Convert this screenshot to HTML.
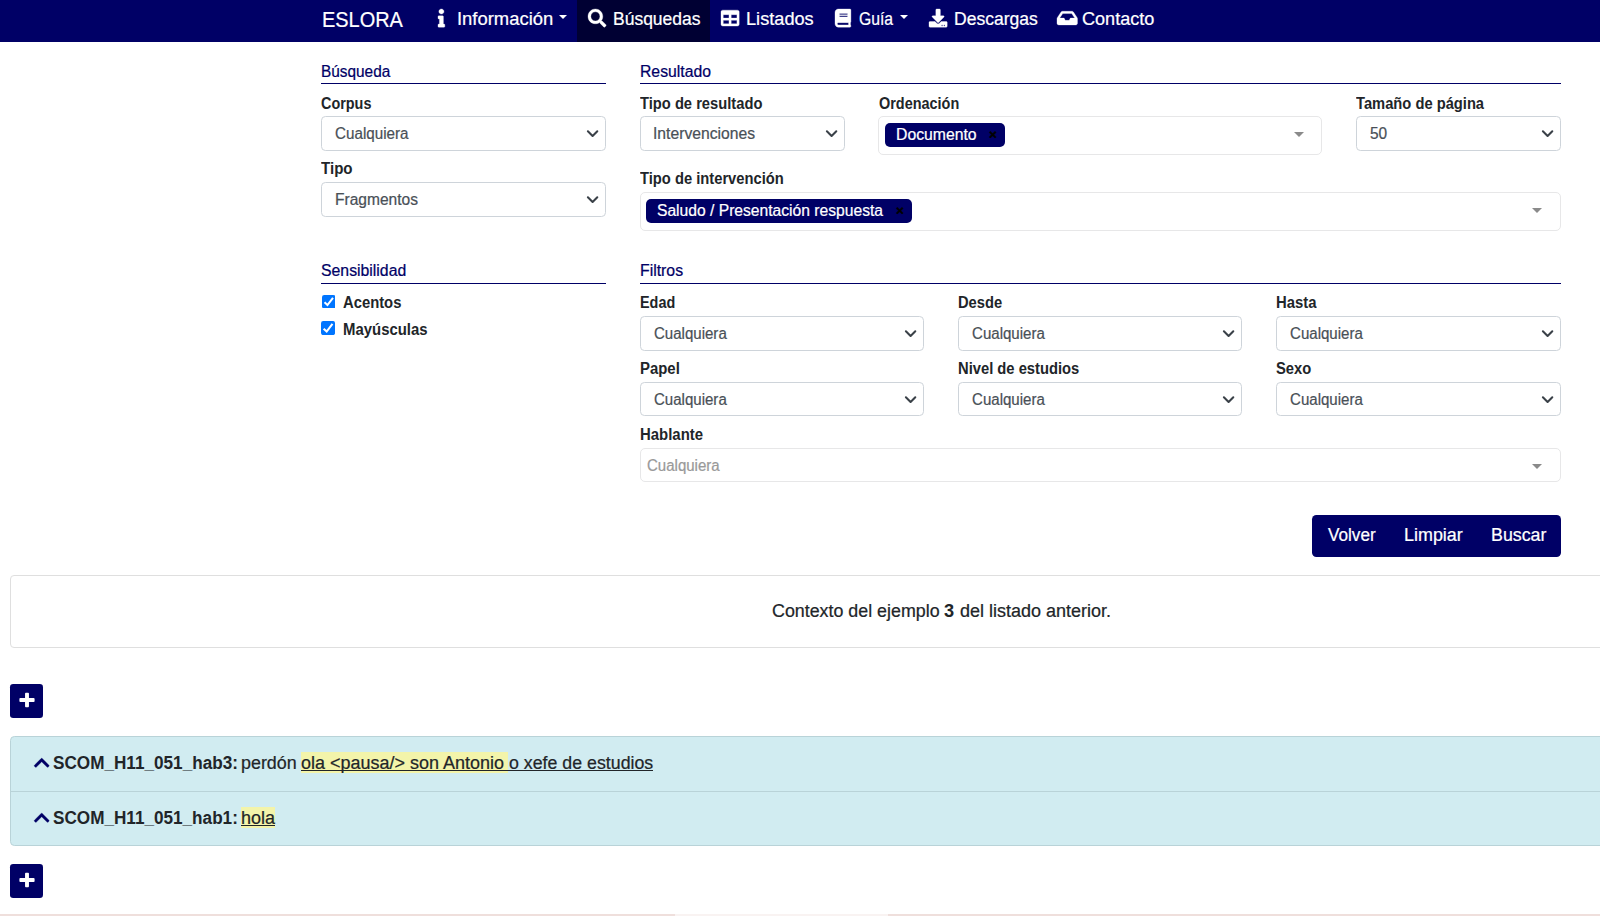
<!DOCTYPE html>
<html lang="es"><head><meta charset="utf-8"><title>ESLORA</title>
<style>
html,body{margin:0;padding:0;background:#fff}
html{overflow:hidden}
body{width:1600px;height:916px;overflow:hidden;font-family:"Liberation Sans", sans-serif}
nav,main,form,section,footer{display:block;margin:0;padding:0}
#page{position:relative;width:1600px;height:916px;overflow:hidden;background:#fff}
.b{position:absolute;display:block}
.t{position:absolute;display:block;white-space:pre;line-height:1;transform-origin:0 0;font-family:"Liberation Sans", sans-serif}
</style></head>
<body>
<div id="page">
<nav>
<div class="b" style="left:0px;top:0px;width:1882px;height:42px;background:#000066"></div>
<div class="b" style="left:577px;top:0px;width:133px;height:42px;background:#000033"></div>
<svg class="b" style="left:438.09px;top:9.10px" width="6.82" height="18.20" viewBox="0 0 192 512" overflow="visible"><path fill="#fff" stroke="#fff" stroke-width="9" d="M20 424.229h20V279.771H20c-11.046 0-20-8.954-20-20V212c0-11.046 8.954-20 20-20h112c11.046 0 20 8.954 20 20v212.229h20c11.046 0 20 8.954 20 20V492c0 11.046-8.954 20-20 20H20c-11.046 0-20-8.954-20-20v-47.771c0-11.046 8.954-20 20-20zM96 0C56.235 0 24 32.235 24 72s32.235 72 72 72 72-32.235 72-72S135.765 0 96 0z"/></svg>
<svg class="b" style="left:587.65px;top:9.10px" width="18.20" height="18.20" viewBox="0 0 512 512" overflow="visible"><path fill="#fff" stroke="#fff" stroke-width="9" d="M505 442.7L405.3 343c-4.5-4.5-10.6-7-17-7H372c27.600-35.300 44-79.700 44-128C416 93.100 322.900 0 208 0S0 93.100 0 208s93.100 208 208 208c48.300 0 92.700-16.400 128-44v16.300c0 6.400 2.500 12.500 7 17l99.700 99.700c9.400 9.400 24.600 9.400 33.900 0l28.300-28.300c9.400-9.400 9.400-24.600.1-34zM208 336c-70.700 0-128-57.200-128-128 0-70.700 57.200-128 128-128 70.700 0 128 57.200 128 128 0 70.700-57.200 128-128 128z"/></svg>
<svg class="b" style="left:720.90px;top:9.10px" width="18.20" height="18.20" viewBox="0 0 512 512" overflow="visible"><path fill="#fff" stroke="#fff" stroke-width="9" d="M464 32H48C21.490 32 0 53.490 0 80v352c0 26.510 21.490 48 48 48h416c26.510 0 48-21.490 48-48V80c0-26.510-21.490-48-48-48zM224 416H64v-96h160v96zm0-160H64v-96h160v96zm224 160H288v-96h160v96zm0-160H288v-96h160v96z"/></svg>
<svg class="b" style="left:834.74px;top:9.10px" width="15.92" height="18.20" viewBox="0 0 448 512" overflow="visible"><path fill="#fff" stroke="#fff" stroke-width="9" d="M448 360V24c0-13.300-10.700-24-24-24H96C43 0 0 43 0 96v320c0 53 43 96 96 96h328c13.300 0 24-10.700 24-24v-16c0-7.500-3.500-14.300-8.900-18.700-4.200-15.400-4.200-59.300 0-74.700 5.400-4.300 8.900-11.100 8.900-18.600zM128 134c0-3.300 2.700-6 6-6h212c3.300 0 6 2.700 6 6v20c0 3.300-2.700 6-6 6H134c-3.300 0-6-2.700-6-6v-20zm0 64c0-3.300 2.700-6 6-6h212c3.300 0 6 2.700 6 6v20c0 3.300-2.700 6-6 6H134c-3.300 0-6-2.700-6-6v-20zm253.400 250H96c-17.700 0-32-14.300-32-32 0-17.600 14.400-32 32-32h285.400c-1.900 17.100-1.900 46.900 0 64z"/></svg>
<svg class="b" style="left:929.05px;top:9.10px" width="18.20" height="18.20" viewBox="0 0 512 512" overflow="visible"><path fill="#fff" stroke="#fff" stroke-width="9" d="M216 0h80c13.300 0 24 10.700 24 24v168h87.700c17.800 0 26.700 21.500 14.100 34.100L269.700 378.300c-7.500 7.500-19.800 7.500-27.300 0L90.100 226.100c-12.600-12.600-3.700-34.100 14.100-34.100H192V24c0-13.300 10.700-24 24-24zm296 376v112c0 13.300-10.700 24-24 24H24c-13.300 0-24-10.700-24-24V376c0-13.300 10.700-24 24-24h146.700l49 49c20.100 20.100 52.500 20.100 72.600 0l49-49H488c13.300 0 24 10.700 24 24zm-124 88c0-11-9-20-20-20s-20 9-20 20 9 20 20 20 20-9 20-20zm64 0c0-11-9-20-20-20s-20 9-20 20 9 20 20 20 20-9 20-20z"/></svg>
<svg class="b" style="left:1056.56px;top:9.10px" width="20.47" height="18.20" viewBox="0 0 576 512" overflow="visible"><path fill="#fff" stroke="#fff" stroke-width="9" d="M567.938 243.908L462.250 85.374A48.003 48.003 0 0 0 422.311 64H153.689a48 48 0 0 0-39.938 21.374L8.062 243.908A47.994 47.994 0 0 0 0 270.533V400c0 26.510 21.490 48 48 48h480c26.510 0 48-21.490 48-48V270.533a47.994 47.994 0 0 0-8.062-26.625zM162.252 128h251.497l85.333 128H376l-32 64H232l-32-64H76.918l85.334-128z"/></svg>
<a class="t" id="t1" style="left:321.75px;top:9.00px;font-size:22px;color:#fff;-webkit-text-stroke:0.22px;transform:scaleX(0.9060);">ESLORA</a>
<a class="t" id="t2" style="left:456.87px;top:10.70px;font-size:17.6px;color:#fff;-webkit-text-stroke:0.22px;transform:scaleX(1.0469);">Información</a>
<a class="t" id="t3" style="left:612.88px;top:10.70px;font-size:17.6px;color:#fff;-webkit-text-stroke:0.22px;transform:scaleX(0.9943);">Búsquedas</a>
<a class="t" id="t4" style="left:745.87px;top:10.70px;font-size:17.6px;color:#fff;-webkit-text-stroke:0.22px;transform:scaleX(1.0329);">Listados</a>
<a class="t" id="t5" style="left:858.59px;top:10.70px;font-size:17.6px;color:#fff;-webkit-text-stroke:0.22px;transform:scaleX(0.8948);">Guía</a>
<a class="t" id="t6" style="left:953.51px;top:10.70px;font-size:17.6px;color:#fff;-webkit-text-stroke:0.22px;transform:scaleX(0.9977);">Descargas</a>
<a class="t" id="t7" style="left:1082.19px;top:10.70px;font-size:17.6px;color:#fff;-webkit-text-stroke:0.22px;transform:scaleX(1.0273);">Contacto</a>
<div class="b" style="left:558.5px;top:15.3px;width:0;height:0;border-left:4.7px solid transparent;border-right:4.7px solid transparent;border-top:4.8px solid #fff"></div>
<div class="b" style="left:899.6px;top:15.3px;width:0;height:0;border-left:4.7px solid transparent;border-right:4.7px solid transparent;border-top:4.8px solid #fff"></div>
</nav>
<main>
<form>
<span class="t" id="t8" style="left:320.66px;top:64.20px;font-size:15.6px;color:#000066;-webkit-text-stroke:0.22px;transform:scaleX(0.9856);">Búsqueda</span>
<div class="b" style="left:321px;top:83px;width:285px;height:1px;background:#000066"></div>
<span class="t" id="t9" style="left:639.94px;top:64.20px;font-size:15.6px;color:#000066;-webkit-text-stroke:0.22px;transform:scaleX(1.0097);">Resultado</span>
<div class="b" style="left:640px;top:83px;width:921px;height:1px;background:#000066"></div>
<span class="t" id="t10" style="left:321.27px;top:263.20px;font-size:15.6px;color:#000066;-webkit-text-stroke:0.22px;transform:scaleX(1.0138);">Sensibilidad</span>
<div class="b" style="left:321px;top:283px;width:285px;height:1px;background:#000066"></div>
<span class="t" id="t11" style="left:639.51px;top:263.20px;font-size:15.6px;color:#000066;-webkit-text-stroke:0.22px;transform:scaleX(1.0138);">Filtros</span>
<div class="b" style="left:640px;top:283px;width:921px;height:1px;background:#000066"></div>
<label class="t" id="t12" style="left:321.49px;top:96.20px;font-size:15.6px;color:#212529;font-weight:700;transform:scaleX(0.9237);">Corpus</label>
<label class="t" id="t13" style="left:321.22px;top:161.20px;font-size:15.6px;color:#212529;font-weight:700;transform:scaleX(0.9677);">Tipo</label>
<label class="t" id="t14" style="left:639.75px;top:96.20px;font-size:15.6px;color:#212529;font-weight:700;transform:scaleX(0.9438);">Tipo de resultado</label>
<label class="t" id="t15" style="left:879.49px;top:96.20px;font-size:15.6px;color:#212529;font-weight:700;transform:scaleX(0.9260);">Ordenación</label>
<label class="t" id="t16" style="left:1356.08px;top:96.20px;font-size:15.6px;color:#212529;font-weight:700;transform:scaleX(0.9433);">Tamaño de página</label>
<label class="t" id="t17" style="left:639.75px;top:171.20px;font-size:15.6px;color:#212529;font-weight:700;transform:scaleX(0.9447);">Tipo de intervención</label>
<label class="t" id="t18" style="left:639.98px;top:295.20px;font-size:15.6px;color:#212529;font-weight:700;transform:scaleX(0.9226);">Edad</label>
<label class="t" id="t19" style="left:958.30px;top:295.20px;font-size:15.6px;color:#212529;font-weight:700;transform:scaleX(0.9421);">Desde</label>
<label class="t" id="t20" style="left:1276.22px;top:295.20px;font-size:15.6px;color:#212529;font-weight:700;transform:scaleX(0.9520);">Hasta</label>
<label class="t" id="t21" style="left:640.47px;top:361.20px;font-size:15.6px;color:#212529;font-weight:700;transform:scaleX(0.9561);">Papel</label>
<label class="t" id="t22" style="left:957.86px;top:361.20px;font-size:15.6px;color:#212529;font-weight:700;transform:scaleX(0.9453);">Nivel de estudios</label>
<label class="t" id="t23" style="left:1275.73px;top:361.20px;font-size:15.6px;color:#212529;font-weight:700;transform:scaleX(0.9457);">Sexo</label>
<label class="t" id="t24" style="left:640.24px;top:427.20px;font-size:15.6px;color:#212529;font-weight:700;transform:scaleX(0.9573);">Hablante</label>
<label class="t" id="t25" style="left:343.41px;top:295.20px;font-size:15.6px;color:#212529;font-weight:700;transform:scaleX(0.9492);">Acentos</label>
<label class="t" id="t26" style="left:343.06px;top:322.20px;font-size:15.6px;color:#212529;font-weight:700;transform:scaleX(0.9565);">Mayúsculas</label>
<div class="b" style="left:321px;top:116px;width:285px;height:35px;border:1px solid #ced4da;border-radius:4.4px;background:#fff;box-sizing:border-box"></div>
<span class="t" id="t27" style="left:335.46px;top:126.20px;font-size:15.6px;color:#495057;-webkit-text-stroke:0.22px;transform:scaleX(0.9746);">Cualquiera</span>
<svg class="b" style="left:586.35px;top:126.85px" width="13.2" height="13.2" viewBox="0 0 16 16"><path d="M2.3 5.2l5.7 5.6 5.7-5.6" fill="none" stroke="#3a4148" stroke-width="2.5" stroke-linecap="round" stroke-linejoin="round"/></svg>
<div class="b" style="left:321px;top:182px;width:285px;height:35px;border:1px solid #ced4da;border-radius:4.4px;background:#fff;box-sizing:border-box"></div>
<span class="t" id="t28" style="left:335.49px;top:192.20px;font-size:15.6px;color:#495057;-webkit-text-stroke:0.22px;transform:scaleX(0.9973);">Fragmentos</span>
<svg class="b" style="left:586.35px;top:192.85px" width="13.2" height="13.2" viewBox="0 0 16 16"><path d="M2.3 5.2l5.7 5.6 5.7-5.6" fill="none" stroke="#3a4148" stroke-width="2.5" stroke-linecap="round" stroke-linejoin="round"/></svg>
<div class="b" style="left:640px;top:116px;width:205px;height:35px;border:1px solid #ced4da;border-radius:4.4px;background:#fff;box-sizing:border-box"></div>
<span class="t" id="t29" style="left:653.45px;top:126.20px;font-size:15.6px;color:#495057;-webkit-text-stroke:0.22px;transform:scaleX(1.0059);">Intervenciones</span>
<svg class="b" style="left:825.35px;top:126.85px" width="13.2" height="13.2" viewBox="0 0 16 16"><path d="M2.3 5.2l5.7 5.6 5.7-5.6" fill="none" stroke="#3a4148" stroke-width="2.5" stroke-linecap="round" stroke-linejoin="round"/></svg>
<div class="b" style="left:1356px;top:116px;width:205px;height:35px;border:1px solid #ced4da;border-radius:4.4px;background:#fff;box-sizing:border-box"></div>
<span class="t" id="t30" style="left:1369.69px;top:126.20px;font-size:15.6px;color:#495057;-webkit-text-stroke:0.22px;transform:scaleX(0.9926);">50</span>
<svg class="b" style="left:1541.35px;top:126.85px" width="13.2" height="13.2" viewBox="0 0 16 16"><path d="M2.3 5.2l5.7 5.6 5.7-5.6" fill="none" stroke="#3a4148" stroke-width="2.5" stroke-linecap="round" stroke-linejoin="round"/></svg>
<div class="b" style="left:640px;top:316px;width:284px;height:35px;border:1px solid #ced4da;border-radius:4.4px;background:#fff;box-sizing:border-box"></div>
<span class="t" id="t31" style="left:654.26px;top:326.20px;font-size:15.6px;color:#495057;-webkit-text-stroke:0.22px;transform:scaleX(0.9645);">Cualquiera</span>
<svg class="b" style="left:904.35px;top:326.85px" width="13.2" height="13.2" viewBox="0 0 16 16"><path d="M2.3 5.2l5.7 5.6 5.7-5.6" fill="none" stroke="#3a4148" stroke-width="2.5" stroke-linecap="round" stroke-linejoin="round"/></svg>
<div class="b" style="left:958px;top:316px;width:284px;height:35px;border:1px solid #ced4da;border-radius:4.4px;background:#fff;box-sizing:border-box"></div>
<span class="t" id="t32" style="left:972.25px;top:326.20px;font-size:15.6px;color:#495057;-webkit-text-stroke:0.22px;transform:scaleX(0.9663);">Cualquiera</span>
<svg class="b" style="left:1222.35px;top:326.85px" width="13.2" height="13.2" viewBox="0 0 16 16"><path d="M2.3 5.2l5.7 5.6 5.7-5.6" fill="none" stroke="#3a4148" stroke-width="2.5" stroke-linecap="round" stroke-linejoin="round"/></svg>
<div class="b" style="left:1276px;top:316px;width:285px;height:35px;border:1px solid #ced4da;border-radius:4.4px;background:#fff;box-sizing:border-box"></div>
<span class="t" id="t33" style="left:1290.25px;top:326.20px;font-size:15.6px;color:#495057;-webkit-text-stroke:0.22px;transform:scaleX(0.9663);">Cualquiera</span>
<svg class="b" style="left:1541.35px;top:326.85px" width="13.2" height="13.2" viewBox="0 0 16 16"><path d="M2.3 5.2l5.7 5.6 5.7-5.6" fill="none" stroke="#3a4148" stroke-width="2.5" stroke-linecap="round" stroke-linejoin="round"/></svg>
<div class="b" style="left:640px;top:382px;width:284px;height:34px;border:1px solid #ced4da;border-radius:4.4px;background:#fff;box-sizing:border-box"></div>
<span class="t" id="t34" style="left:654.26px;top:392.20px;font-size:15.6px;color:#495057;-webkit-text-stroke:0.22px;transform:scaleX(0.9645);">Cualquiera</span>
<svg class="b" style="left:904.35px;top:392.85px" width="13.2" height="13.2" viewBox="0 0 16 16"><path d="M2.3 5.2l5.7 5.6 5.7-5.6" fill="none" stroke="#3a4148" stroke-width="2.5" stroke-linecap="round" stroke-linejoin="round"/></svg>
<div class="b" style="left:958px;top:382px;width:284px;height:34px;border:1px solid #ced4da;border-radius:4.4px;background:#fff;box-sizing:border-box"></div>
<span class="t" id="t35" style="left:972.25px;top:392.20px;font-size:15.6px;color:#495057;-webkit-text-stroke:0.22px;transform:scaleX(0.9663);">Cualquiera</span>
<svg class="b" style="left:1222.35px;top:392.85px" width="13.2" height="13.2" viewBox="0 0 16 16"><path d="M2.3 5.2l5.7 5.6 5.7-5.6" fill="none" stroke="#3a4148" stroke-width="2.5" stroke-linecap="round" stroke-linejoin="round"/></svg>
<div class="b" style="left:1276px;top:382px;width:285px;height:34px;border:1px solid #ced4da;border-radius:4.4px;background:#fff;box-sizing:border-box"></div>
<span class="t" id="t36" style="left:1290.25px;top:392.20px;font-size:15.6px;color:#495057;-webkit-text-stroke:0.22px;transform:scaleX(0.9663);">Cualquiera</span>
<svg class="b" style="left:1541.35px;top:392.85px" width="13.2" height="13.2" viewBox="0 0 16 16"><path d="M2.3 5.2l5.7 5.6 5.7-5.6" fill="none" stroke="#3a4148" stroke-width="2.5" stroke-linecap="round" stroke-linejoin="round"/></svg>
<div class="b" style="left:878px;top:116px;width:444px;height:39px;border:1px solid #e7e7e8;border-radius:5px;background:#fff;box-sizing:border-box"></div>
<div class="b" style="left:1293.75px;top:131.9px;width:0;height:0;border-left:5.0px solid transparent;border-right:5.0px solid transparent;border-top:5px solid #8a8a8a"></div>
<div class="b" style="left:640px;top:192px;width:921px;height:39px;border:1px solid #e7e7e8;border-radius:5px;background:#fff;box-sizing:border-box"></div>
<div class="b" style="left:1531.75px;top:207.8px;width:0;height:0;border-left:5.0px solid transparent;border-right:5.0px solid transparent;border-top:5px solid #8a8a8a"></div>
<div class="b" style="left:640px;top:448px;width:921px;height:34px;border:1px solid #e7e7e8;border-radius:5px;background:#fff;box-sizing:border-box"></div>
<div class="b" style="left:1531.9px;top:464.2px;width:0;height:0;border-left:5.0px solid transparent;border-right:5.0px solid transparent;border-top:5px solid #8a8a8a"></div>
<span class="t" id="t37" style="left:646.79px;top:458.20px;font-size:15.6px;color:#999;-webkit-text-stroke:0.22px;transform:scaleX(0.9634);">Cualquiera</span>
<div class="b" style="left:885px;top:123px;width:120px;height:24px;background:#000066;border-radius:5px"></div>
<span class="t" id="t38" style="left:895.52px;top:127.20px;font-size:15.6px;color:#fff;-webkit-text-stroke:0.22px;transform:scaleX(1.0107);">Documento</span>
<span class="t" id="t39" style="left:988.90px;top:128.25px;font-size:13.5px;color:#000;font-weight:700;transform:scaleX(1.0020);-webkit-text-stroke:0.5px;">×</span>
<div class="b" style="left:646px;top:199.3px;width:266px;height:23.299999999999983px;background:#000066;border-radius:5px"></div>
<span class="t" id="t40" style="left:656.76px;top:203.20px;font-size:15.6px;color:#fff;-webkit-text-stroke:0.22px;transform:scaleX(1.0027);">Saludo / Presentación respuesta</span>
<span class="t" id="t41" style="left:895.84px;top:204.25px;font-size:13.5px;color:#000;font-weight:700;transform:scaleX(1.0020);-webkit-text-stroke:0.5px;">×</span>
<svg class="b" style="left:321.5px;top:294.9px" width="13.5" height="13.5" viewBox="0 0 13.4 13.4"><rect width="13.4" height="13.4" rx="2.2" fill="#0075ff"/><path d="M2.5 7.3l2.9 2.7 5.5-7.2" fill="none" stroke="#fff" stroke-width="2"/></svg>
<svg class="b" style="left:321.2px;top:321.1px" width="14.1" height="14.1" viewBox="0 0 13.4 13.4"><rect width="13.4" height="13.4" rx="2.2" fill="#0075ff"/><path d="M2.5 7.3l2.9 2.7 5.5-7.2" fill="none" stroke="#fff" stroke-width="2"/></svg>
<div class="b" style="left:1312px;top:515px;width:249px;height:42px;background:#000066;border-radius:4.4px"></div>
<span class="t" id="t42" style="left:1327.58px;top:526.70px;font-size:17.6px;color:#fff;-webkit-text-stroke:0.22px;transform:scaleX(0.9760);">Volver</span>
<span class="t" id="t43" style="left:1403.86px;top:526.70px;font-size:17.6px;color:#fff;-webkit-text-stroke:0.22px;transform:scaleX(1.0186);">Limpiar</span>
<span class="t" id="t44" style="left:1490.67px;top:526.70px;font-size:17.6px;color:#fff;-webkit-text-stroke:0.22px;transform:scaleX(1.0126);">Buscar</span>
</form>
<section>
<div class="b" style="left:10px;top:575px;width:1862px;height:73px;border:1px solid #dfdfdf;border-radius:4px;box-sizing:border-box;background:#fff"></div>
<span class="t" id="t45" style="left:771.83px;top:602.70px;font-size:17.6px;color:#212529;-webkit-text-stroke:0.22px;transform:scaleX(1.0137);">Contexto del ejemplo</span>
<span class="t" id="t46" style="left:944.09px;top:602.70px;font-size:17.6px;color:#212529;font-weight:700;transform:scaleX(1.0352);">3</span>
<span class="t" id="t47" style="left:959.63px;top:602.70px;font-size:17.6px;color:#212529;-webkit-text-stroke:0.22px;transform:scaleX(1.0233);">del listado anterior.</span>
<div class="b" style="left:10px;top:683.8px;width:33px;height:34.200000000000045px;background:#000066;border-radius:3.2px"></div>
<svg class="b" style="left:18.95px;top:691.90px" width="16" height="16" viewBox="0 0 16 16"><rect x="0.4" y="6.05" width="15.2" height="3.9" rx="0.9" fill="#fff"/><rect x="6.05" y="0.85" width="3.9" height="14.3" rx="0.9" fill="#fff"/></svg>
<div class="b" style="left:10px;top:864px;width:33px;height:34.200000000000045px;background:#000066;border-radius:3.2px"></div>
<svg class="b" style="left:18.95px;top:872.10px" width="16" height="16" viewBox="0 0 16 16"><rect x="0.4" y="6.05" width="15.2" height="3.9" rx="0.9" fill="#fff"/><rect x="6.05" y="0.85" width="3.9" height="14.3" rx="0.9" fill="#fff"/></svg>
<div class="b" style="left:10px;top:736px;width:1862px;height:110px;background:#d1ecf1;border:1px solid #b9d3d8;border-radius:4.4px;box-sizing:border-box"></div>
<div class="b" style="left:11px;top:791px;width:1860px;height:1px;background:#b9d3d8"></div>
<svg class="b" style="left:33.55px;top:753.80px" width="15.40" height="17.60" viewBox="0 0 448 512" overflow="visible"><path fill="#000066" stroke="#000066" stroke-width="9" d="M240.971 130.524l194.343 194.343c9.373 9.373 9.373 24.569 0 33.941l-22.667 22.667c-9.357 9.357-24.522 9.375-33.901.040L224 227.495 69.255 381.516c-9.379 9.335-24.544 9.317-33.901-.040l-22.667-22.667c-9.373-9.373-9.373-24.569 0-33.941L207.030 130.525c9.372-9.373 24.568-9.373 33.941-.001z"/></svg>
<span class="t" id="t48" style="left:53.31px;top:754.70px;font-size:17.6px;color:#212529;font-weight:700;transform:scaleX(0.9748);">SCOM_H11_051_hab3:</span>
<span class="t" id="t49" style="left:241.06px;top:754.70px;font-size:17.6px;color:#212529;-webkit-text-stroke:0.22px;transform:scaleX(1.0173);">perdón</span>
<div class="b" style="left:301px;top:751.8px;width:206.8px;height:20.800000000000068px;background:#f3f4aa"></div>
<span class="t" id="t50" style="left:301.35px;top:754.70px;font-size:17.6px;color:#212529;-webkit-text-stroke:0.22px;transform:scaleX(1.0217);">ola &lt;pausa/&gt; son Antonio</span>
<span class="t" id="t51" style="left:509.07px;top:754.70px;font-size:17.6px;color:#212529;-webkit-text-stroke:0.22px;transform:scaleX(1.0100);">o xefe de estudios</span>
<div class="b" style="left:301px;top:770.2px;width:351.70000000000005px;height:1.099999999999909px;background:#212529"></div>
<svg class="b" style="left:33.55px;top:808.60px" width="15.40" height="17.60" viewBox="0 0 448 512" overflow="visible"><path fill="#000066" stroke="#000066" stroke-width="9" d="M240.971 130.524l194.343 194.343c9.373 9.373 9.373 24.569 0 33.941l-22.667 22.667c-9.357 9.357-24.522 9.375-33.901.040L224 227.495 69.255 381.516c-9.379 9.335-24.544 9.317-33.901-.040l-22.667-22.667c-9.373-9.373-9.373-24.569 0-33.941L207.030 130.525c9.372-9.373 24.568-9.373 33.941-.001z"/></svg>
<span class="t" id="t52" style="left:53.31px;top:809.70px;font-size:17.6px;color:#212529;font-weight:700;transform:scaleX(0.9743);">SCOM_H11_051_hab1:</span>
<div class="b" style="left:241px;top:806.6px;width:34.19999999999999px;height:21.0px;background:#f3f4aa"></div>
<span class="t" id="t53" style="left:240.80px;top:809.70px;font-size:17.6px;color:#212529;-webkit-text-stroke:0.22px;transform:scaleX(1.0226);">hola</span>
<div class="b" style="left:241px;top:825.0px;width:34.19999999999999px;height:1.1000000000000227px;background:#212529"></div>
</section>
</main>
<footer>
<div class="b" style="left:0px;top:914px;width:1882px;height:2px;background:#efdfdc"></div>
<div class="b" style="left:675px;top:914px;width:213px;height:2px;background:#f9f3f2"></div>
</footer>
</div>
</body></html>
